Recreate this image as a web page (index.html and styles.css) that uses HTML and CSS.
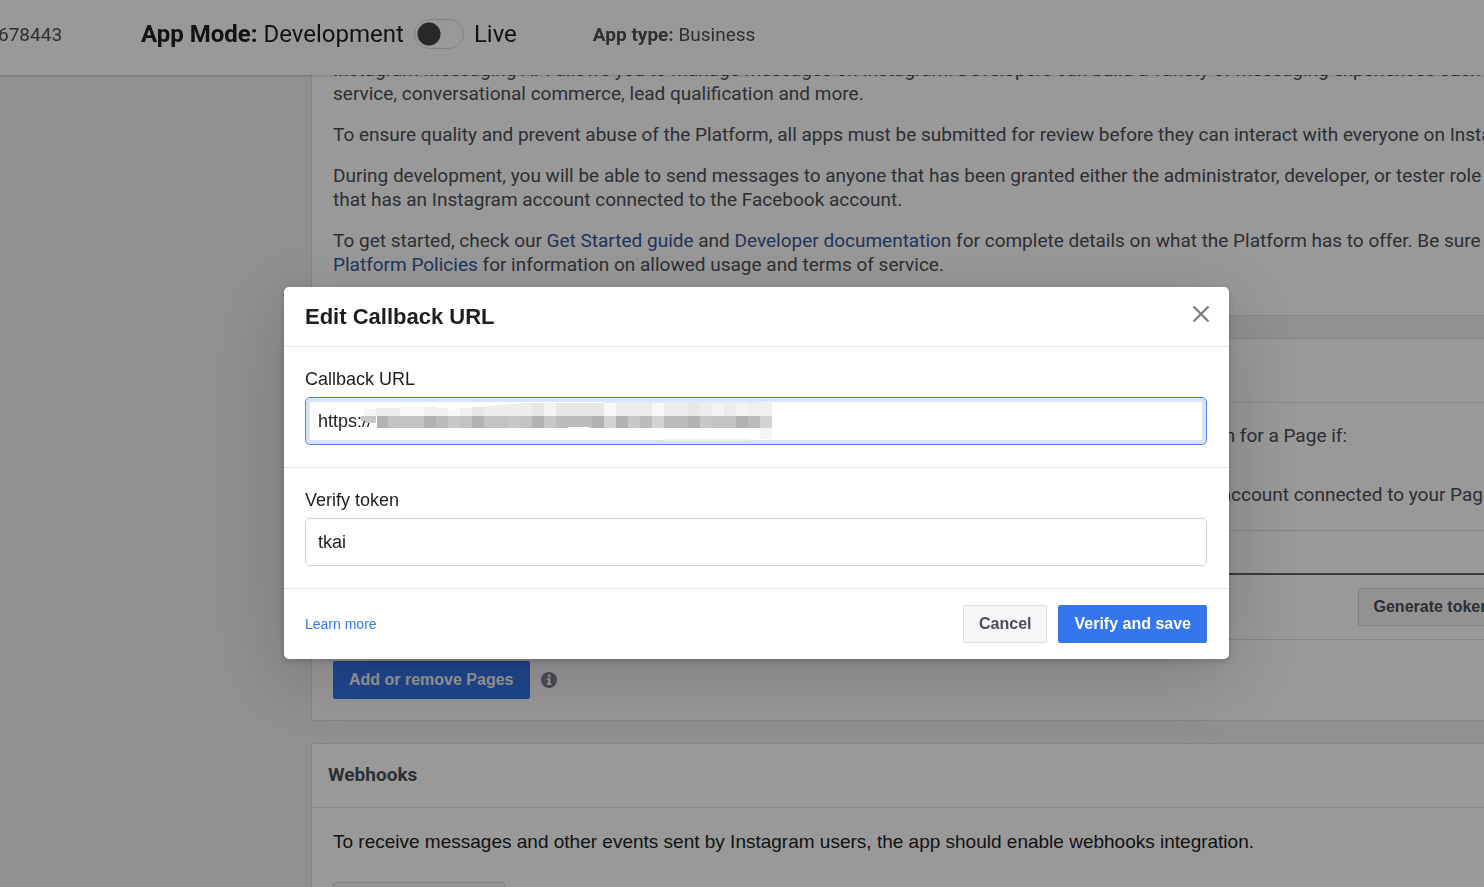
FILE: index.html
```html
<!DOCTYPE html>
<html lang="en">
<head>
<meta charset="utf-8">
<title>Edit Callback URL</title>
<link rel="stylesheet" href="styles.css">
</head>
<body>
<header class="topbar">
  <span class="app-id">678443</span>
  <label class="mode"><span><b>App Mode:</b> Development</span><input class="switch" type="checkbox" role="switch"><span>Live</span></label>
  <span class="app-type"><b>App type:</b> Business</span>
</header>

<main class="content">
  <section class="card intro">
    <p>Instagram Messaging API allows you to manage messages on Instagram. Developers can build a variety of messaging experiences such as<br>service, conversational commerce, lead qualification and more.</p>
    <p>To ensure quality and prevent abuse of the Platform, all apps must be submitted for review before they can interact with everyone on Instagram.</p>
    <p>During development, you will be able to send messages to anyone that has been granted either the administrator, developer, or tester role for<br>that has an Instagram account connected to the Facebook account.</p>
    <p>To get started, check our <a href="#">Get Started guide</a> and <a href="#">Developer documentation</a> for complete details on what the Platform has to offer. Be sure to<br><a href="#">Platform Policies</a> for information on allowed usage and terms of service.</p>
  </section>

  <section class="card">
    <div class="card-head"></div>
    <div class="hints">
      <p class="hint">n for a Page if:</p>
      <p class="hint hint-long">account connected to your Page</p>
    </div>
    <table class="pages">
      <thead><tr><th></th><th></th></tr></thead>
      <tbody><tr><td></td><td class="action"><button class="btn" type="button">Generate token</button></td></tr></tbody>
    </table>
    <div class="page-actions">
      <button class="btn primary" type="button">Add or remove Pages</button>
      <svg class="info" viewBox="0 0 16 16" aria-hidden="true"><circle cx="8" cy="8" r="8" fill="#7f858f"/><path d="M5.8 6.2h3.6v5.2h1.1v1.5H5.7v-1.5h1.2V7.7H5.8z" fill="#fff"/><circle cx="8.1" cy="3.9" r="1.4" fill="#fff"/></svg>
    </div>
  </section>

  <section class="card">
    <div class="card-head"><h2>Webhooks</h2></div>
    <div class="webhooks">
      <p>To receive messages and other events sent by Instagram users, the app should enable webhooks integration.</p>
      <button class="btn wide" type="button" aria-label="Webhooks"></button>
    </div>
  </section>
</main>

<div class="overlay">
  <form class="dialog" role="dialog" aria-labelledby="dialog-title">
    <div class="dialog-head">
      <h1 id="dialog-title">Edit Callback URL</h1>
      <button class="close" type="button" aria-label="Close"><svg viewBox="0 0 18 18"><path d="M1.5 1.5l15 15M16.5 1.5l-15 15" stroke="#7b808a" stroke-width="2.4" fill="none"/></svg></button>
    </div>
    <div class="field">
      <label for="url">Callback URL</label>
      <div class="control">
        <input id="url" class="focused" type="text" value="https://">
        <svg class="mosaic" viewBox="0 0 411 42" aria-hidden="true" shape-rendering="crispEdges">
          <path fill="#e1e8fb" d="M243 1h158v2H243z"/>
          <path fill="#e9eefb" d="M303 39h86v2h-86z"/>
          <path fill="#fff" d="M0 9h3v7H0z"/>
          <path fill="#c8c8c8" d="M0 16h15v7H4v-2H0z"/>
          <path fill="#333" d="M16 23h1v2h-1z"/>
          <path fill="#f4f4f4" d="M3 9h12v7H3zM183 3h12v13h-12zM351 3h12v13h-12zM375 3h12v13h-12zM399 28h12v11h-12z"/>
          <path fill="#ececec" d="M15 8h24v8H15zM255 3h36v13h-36zM303 3h24v13h-24zM339 3h12v13h-12zM363 3h12v13h-12z"/>
          <path fill="#f8f8f8" d="M39 7h24v9H39zM87 9h12v7H87zM243 3h12v13h-12zM291 3h12v13h-12z"/>
          <path fill="#f0f0f0" d="M63 7h12v9H63zM75 8h12v8H75zM99 8h12v8H99zM387 3h24v13h-24z"/>
          <path fill="#e7e7e7" d="M111 7h12v9h-12zM171 3h12v13h-12zM195 3h48v13h-48zM327 3h12v13h-12z"/>
          <path fill="#eee" d="M123 6h12v10h-12zM135 5h12v11h-12zM147 4h12v12h-12zM159 3h12v13h-12z"/>
          <path fill="#c3c3c3" d="M27 16h372v12H27z"/>
          <path fill="#b2b2b2" d="M16 16h11v12H16zM63 16h12v12H63zM111 16h12v12h-12zM171 16h12v12h-12zM231 16h12v12h-12zM255 16h12v12h-12zM327 16h12v12h-12zM375 16h12v12h-12z"/>
          <path fill="#bcbcbc" d="M75 16h12v12H75zM195 16h36v12h-36zM279 16h12v12h-12zM303 16h24v12h-24zM387 16h12v12h-12z"/>
          <path fill="#c8c8c8" d="M87 16h12v12H87zM147 16h12v12h-12zM183 16h12v12h-12zM267 16h12v12h-12zM339 16h12v12h-12z"/>
          <path fill="#d3d3d3" d="M243 16h12v12h-12zM291 16h12v12h-12zM399 16h12v12h-12z"/>
          <path fill="#fff" d="M207 27h22v1h-22z"/>
        </svg>
      </div>
    </div>
    <div class="field">
      <label for="token">Verify token</label>
      <input id="token" type="text" value="tkai">
    </div>
    <div class="dialog-foot">
      <a href="#">Learn more</a>
      <button class="btn" type="button">Cancel</button>
      <button class="btn primary" type="submit">Verify and save</button>
    </div>
  </form>
</div>
</body>
</html>
```
FILE: styles.css
```css
* { box-sizing: border-box; }
body {
  margin: 0;
  height: 100vh;
  overflow: hidden;
  background: #f0f0f0;
  color: #4b4f56;
  font: 19px/24px Roboto, sans-serif;
}
p, h1, h2 { margin: 0; }
a { color: #385898; text-decoration: none; }

.topbar {
  position: fixed;
  inset: 0 0 auto 0;
  z-index: 1;
  height: 75px;
  display: flex;
  align-items: center;
  padding-bottom: 7px;
  background: #fff;
  box-shadow: 0 1px 2px rgba(0, 0, 0, .2);
  white-space: nowrap;
}
.app-id, .app-type { padding-top: 2px; }
.app-id { width: 143px; margin-left: -2px; }
.mode { display: flex; align-items: center; gap: 10px; margin-right: 76px; color: #1c1e21; font-size: 24px; }
.switch {
  appearance: none;
  width: 50px;
  height: 30px;
  margin: 0;
  border: 1px solid #dadde1;
  border-radius: 15px;
  background: radial-gradient(circle at 14px 14px, #444 11px, transparent 12px);
}

/* Cards continue past the right edge of the window */
.content { margin: 0 -23px 0 311px; display: grid; gap: 22px; }
.card { min-width: 0; background: #fff; border: 1px solid #dddfe2; overflow: hidden; white-space: nowrap; }
.intro { padding: 57px 21px 38px; display: grid; gap: 17px; }
.card-head { height: 64px; padding: 19px 16px; border-bottom: 1px solid #e4e5e8; }
.card-head h2 { font-size: 19px; line-height: 24px; }
.hints { height: 127px; padding: 21px; display: grid; align-content: start; gap: 35px; }
.hint { width: 1014px; text-align: right; }
.hint-long { width: 1160px; }
.pages { width: 100%; border-collapse: collapse; border-top: 1px solid #dddfe2; }
.pages th { height: 43px; padding: 0; border-bottom: 2px solid #606266; }
.pages td { height: 66px; padding: 0; border-bottom: 1px solid #dddfe2; }
.pages .action { width: 126px; }
.page-actions { display: flex; align-items: center; gap: 11px; padding: 21px; }
.info { width: 16px; height: 16px; }
.webhooks { padding: 22px 21px; display: grid; gap: 28px; justify-items: start; color: #1c1e21; font-family: "Liberation Sans", Arial, sans-serif; }

.btn {
  height: 38px;
  padding: 0 15px;
  border: 1px solid #dadde1;
  border-radius: 2px;
  background: #f5f6f7;
  color: #4b4f56;
  font: bold 16px/24px "Liberation Sans", Arial, sans-serif;
  white-space: nowrap;
}
.btn.primary { border-color: #3578e5; background: #3576ee; color: #fff; }
.btn.wide { width: 172px; }

.overlay {
  position: fixed;
  inset: 0;
  z-index: 2;
  display: flex;
  align-items: center;
  justify-content: center;
  padding: 59px 0 0 29px;
  background: rgba(0, 0, 0, .4);
  font-family: "Liberation Sans", Arial, sans-serif;
}
.dialog {
  width: 100%;
  max-width: 945px;
  border-radius: 5px;
  background: #fff;
  color: #1c1e21;
  box-shadow: 0 18px 80px rgba(0, 0, 0, .2), 0 2px 6px rgba(0, 0, 0, .2);
}
.dialog-head { display: flex; align-items: center; justify-content: space-between; height: 60px; padding: 0 19px 0 21px; border-bottom: 1px solid #e5e5e8; }
.dialog-head h1 { font-size: 22px; line-height: 28px; }
.close { width: 18px; height: 18px; margin-bottom: 6px; padding: 0; border: 0; background: none; }
.close svg { display: block; }
.field { display: grid; gap: 6px; padding: 20px 22px 22px 21px; border-bottom: 1px solid #e5e5e8; font-size: 18px; }
.field input {
  width: 100%;
  height: 48px;
  padding: 0 12px;
  border: 1px solid #ccd0d5;
  border-radius: 5px;
  color: #1c1e21;
  font: 18px/24px "Liberation Sans", Arial, sans-serif;
}
.field .focused { border-color: #4f83ea; box-shadow: inset 0 0 0 4px #d9e4fa; }
.control { position: relative; display: grid; }
.mosaic { position: absolute; left: 56px; top: 3px; width: 411px; height: 42px; }
.dialog-foot { display: flex; align-items: center; gap: 11px; padding: 16px 22px 16px 21px; }
.dialog-foot a { margin-right: auto; color: #3578e5; font-size: 14px; }
```
